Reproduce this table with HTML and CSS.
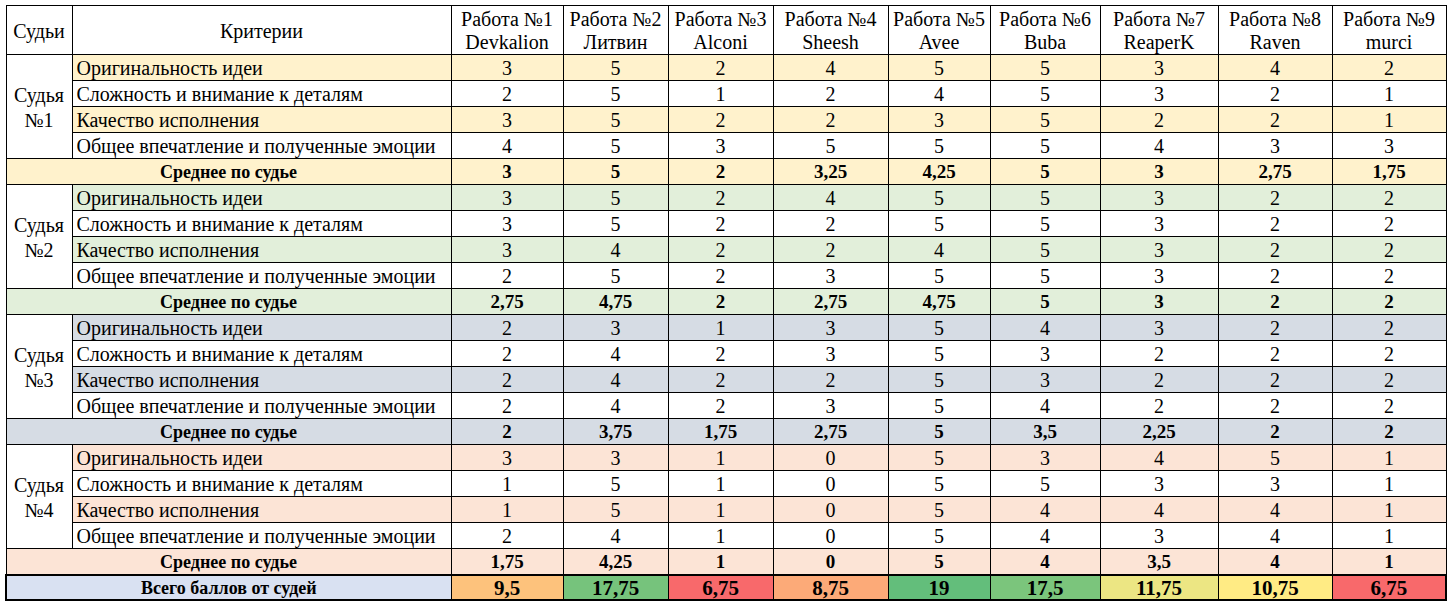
FILE: index.html
```html
<!DOCTYPE html>
<html lang="ru">
<head>
<meta charset="utf-8">
<link rel="stylesheet" href="styles.css">
</head>
<body>
<div class="sheet">
<table class="scores">
<colgroup>
<col class="c-judge"><col class="c-crit">
<col class="c1"><col class="c2"><col class="c3"><col class="c4"><col class="c5"><col class="c6"><col class="c7"><col class="c8"><col class="c9">
</colgroup>
<thead>
<tr class="head">
<th>Судьи</th><th>Критерии</th>
<th>Работа №1<br>Devkalion</th>
<th>Работа №2<br>Литвин</th>
<th>Работа №3<br>Alconi</th>
<th>Работа №4<br>Sheesh</th>
<th>Работа №5<br>Avee</th>
<th>Работа №6<br>Buba</th>
<th>Работа №7<br>ReaperK</th>
<th>Работа №8<br>Raven</th>
<th>Работа №9<br>murci</th>
</tr>
</thead>
<tbody class="g1">
<tr class="tint"><td class="judge" rowspan="4">Судья<br>№1</td><td class="crit">Оригинальность идеи</td><td>3</td><td>5</td><td>2</td><td>4</td><td>5</td><td>5</td><td>3</td><td>4</td><td>2</td></tr>
<tr><td class="crit">Сложность и внимание к деталям</td><td>2</td><td>5</td><td>1</td><td>2</td><td>4</td><td>5</td><td>3</td><td>2</td><td>1</td></tr>
<tr class="tint"><td class="crit">Качество исполнения</td><td>3</td><td>5</td><td>2</td><td>2</td><td>3</td><td>5</td><td>2</td><td>2</td><td>1</td></tr>
<tr><td class="crit">Общее впечатление и полученные эмоции</td><td>4</td><td>5</td><td>3</td><td>5</td><td>5</td><td>5</td><td>4</td><td>3</td><td>3</td></tr>
<tr class="tint avg"><td class="avg-label" colspan="2">Среднее по судье</td><td>3</td><td>5</td><td>2</td><td>3,25</td><td>4,25</td><td>5</td><td>3</td><td>2,75</td><td>1,75</td></tr>
</tbody>
<tbody class="g2">
<tr class="tint"><td class="judge" rowspan="4">Судья<br>№2</td><td class="crit">Оригинальность идеи</td><td>3</td><td>5</td><td>2</td><td>4</td><td>5</td><td>5</td><td>3</td><td>2</td><td>2</td></tr>
<tr><td class="crit">Сложность и внимание к деталям</td><td>3</td><td>5</td><td>2</td><td>2</td><td>5</td><td>5</td><td>3</td><td>2</td><td>2</td></tr>
<tr class="tint"><td class="crit">Качество исполнения</td><td>3</td><td>4</td><td>2</td><td>2</td><td>4</td><td>5</td><td>3</td><td>2</td><td>2</td></tr>
<tr><td class="crit">Общее впечатление и полученные эмоции</td><td>2</td><td>5</td><td>2</td><td>3</td><td>5</td><td>5</td><td>3</td><td>2</td><td>2</td></tr>
<tr class="tint avg"><td class="avg-label" colspan="2">Среднее по судье</td><td>2,75</td><td>4,75</td><td>2</td><td>2,75</td><td>4,75</td><td>5</td><td>3</td><td>2</td><td>2</td></tr>
</tbody>
<tbody class="g3">
<tr class="tint"><td class="judge" rowspan="4">Судья<br>№3</td><td class="crit">Оригинальность идеи</td><td>2</td><td>3</td><td>1</td><td>3</td><td>5</td><td>4</td><td>3</td><td>2</td><td>2</td></tr>
<tr><td class="crit">Сложность и внимание к деталям</td><td>2</td><td>4</td><td>2</td><td>3</td><td>5</td><td>3</td><td>2</td><td>2</td><td>2</td></tr>
<tr class="tint"><td class="crit">Качество исполнения</td><td>2</td><td>4</td><td>2</td><td>2</td><td>5</td><td>3</td><td>2</td><td>2</td><td>2</td></tr>
<tr><td class="crit">Общее впечатление и полученные эмоции</td><td>2</td><td>4</td><td>2</td><td>3</td><td>5</td><td>4</td><td>2</td><td>2</td><td>2</td></tr>
<tr class="tint avg"><td class="avg-label" colspan="2">Среднее по судье</td><td>2</td><td>3,75</td><td>1,75</td><td>2,75</td><td>5</td><td>3,5</td><td>2,25</td><td>2</td><td>2</td></tr>
</tbody>
<tbody class="g4">
<tr class="tint"><td class="judge" rowspan="4">Судья<br>№4</td><td class="crit">Оригинальность идеи</td><td>3</td><td>3</td><td>1</td><td>0</td><td>5</td><td>3</td><td>4</td><td>5</td><td>1</td></tr>
<tr><td class="crit">Сложность и внимание к деталям</td><td>1</td><td>5</td><td>1</td><td>0</td><td>5</td><td>5</td><td>3</td><td>3</td><td>1</td></tr>
<tr class="tint"><td class="crit">Качество исполнения</td><td>1</td><td>5</td><td>1</td><td>0</td><td>5</td><td>4</td><td>4</td><td>4</td><td>1</td></tr>
<tr><td class="crit">Общее впечатление и полученные эмоции</td><td>2</td><td>4</td><td>1</td><td>0</td><td>5</td><td>4</td><td>3</td><td>4</td><td>1</td></tr>
<tr class="tint avg"><td class="avg-label" colspan="2">Среднее по судье</td><td>1,75</td><td>4,25</td><td>1</td><td>0</td><td>5</td><td>4</td><td>3,5</td><td>4</td><td>1</td></tr>
</tbody>
<tfoot>
<tr class="total">
<td colspan="2" class="total-label">Всего баллов от судей</td>
<td class="s-9-5">9,5</td>
<td class="s-17-75">17,75</td>
<td class="s-6-75">6,75</td>
<td class="s-8-75">8,75</td>
<td class="s-19">19</td>
<td class="s-17-5">17,5</td>
<td class="s-11-75">11,75</td>
<td class="s-10-75">10,75</td>
<td class="s-6-75">6,75</td>
</tr>
</tfoot>
</table>
</div>
</body>
</html>
```

FILE: styles.css
```css
html, body {
  margin: 0;
  padding: 0;
  background: #ffffff;
}

.sheet {
  padding: 5px 0 0 5px;
}

.scores {
  border-collapse: collapse;
  table-layout: fixed;
  width: 1441px;
  font-family: "Liberation Serif", "Times New Roman", serif;
  font-size: 20px;
  color: #000;
}

.c-judge { width: 66px; }
.c-crit { width: 379px; }
.c1 { width: 112px; }
.c2 { width: 105px; }
.c3 { width: 105px; }
.c4 { width: 115px; }
.c5 { width: 102px; }
.c6 { width: 110px; }
.c7 { width: 118px; }
.c8 { width: 114px; }
.c9 { width: 114px; }

.scores th,
.scores td {
  border: 1px solid #000;
  padding: 0;
  text-align: center;
  vertical-align: middle;
  white-space: nowrap;
  overflow: hidden;
  font-family: "Liberation Serif", "Times New Roman", serif;
}

.scores th {
  font-weight: normal;
  height: 46px;
  line-height: 23px;
  padding-top: 2px;
}

.scores td {
  height: 25px;
  line-height: 20px;
}

.scores td.crit {
  text-align: left;
  padding-left: 4px;
}

.scores td.judge {
  background: #fff;
  line-height: 25px;
  padding-top: 3px;
}

.avg td {
  font-weight: bold;
  font-size: 19px;
}

.avg td.avg-label {
  font-size: 18px;
}

.g1 .tint { background: #fff2cc; }
.g2 .tint { background: #e2efda; }
.g3 .tint { background: #d6dce4; }
.g4 .tint { background: #fce4d6; }

.total td {
  border-top: 2px solid #000;
  border-bottom: 2px solid #000;
  font-weight: bold;
  font-size: 21px;
  height: 23px;
}

.total td.total-label {
  border-left: 2px solid #000;
  background: #d9e1f2;
  font-size: 18px;
}

.total td:last-child {
  border-right: 2px solid #000;
}

.s-9-5 { background: #fdc27c; }
.s-17-75 { background: #76c37c; }
.s-6-75 { background: #f8696b; }
.s-8-75 { background: #fcaa78; }
.s-19 { background: #63be7b; }
.s-17-5 { background: #7bc57c; }
.s-11-75 { background: #ece683; }
.s-10-75 { background: #ffeb84; }
```
